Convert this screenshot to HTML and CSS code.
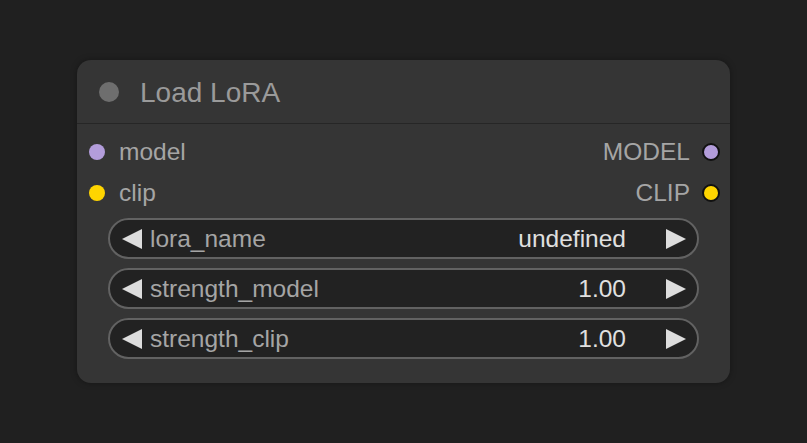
FILE: index.html
```html
<!DOCTYPE html>
<html>
<head>
<meta charset="utf-8">
<link rel="stylesheet" href="styles.css">
</head>
<body>
<div class="canvas">
  <div class="node">
    <div class="title">
      <span class="title-dot"></span>
      <span class="title-text">Load LoRA</span>
    </div>
    <div class="slots">
      <div class="slot-row">
        <div class="slot in"><span class="dot purple"></span><span>model</span></div>
        <div class="slot out"><span>MODEL</span><span class="dot purple outlined"></span></div>
      </div>
      <div class="slot-row">
        <div class="slot in"><span class="dot yellow"></span><span>clip</span></div>
        <div class="slot out"><span>CLIP</span><span class="dot yellow outlined"></span></div>
      </div>
    </div>
    <div class="widgets">
      <div class="widget">
        <span class="arrow left"></span>
        <span class="w-label">lora_name</span>
        <span class="w-value">undefined</span>
        <span class="arrow right"></span>
      </div>
      <div class="widget">
        <span class="arrow left"></span>
        <span class="w-label">strength_model</span>
        <span class="w-value">1.00</span>
        <span class="arrow right"></span>
      </div>
      <div class="widget">
        <span class="arrow left"></span>
        <span class="w-label">strength_clip</span>
        <span class="w-value">1.00</span>
        <span class="arrow right"></span>
      </div>
    </div>
  </div>
</div>
</body>
</html>
```
FILE: styles.css
```css
html, body {
  margin: 0;
  padding: 0;
  background: #202020;
  width: 807px;
  height: 443px;
  overflow: hidden;
  font-family: "Liberation Sans", Arial, sans-serif;
}
.canvas {
  padding: 60px 0 0 77px;
}
.node {
  width: 653px;
  height: 323px;
  box-sizing: border-box;
  background: #353535;
  border-radius: 14px;
  box-shadow: 0 0 6px rgba(0,0,0,0.35);
  overflow: hidden;
}
.title {
  height: 63px;
  border-bottom: 1px solid #262626;
  display: flex;
  align-items: center;
  padding-left: 22px;
  box-sizing: content-box;
}
.title-dot {
  width: 20px;
  height: 20px;
  border-radius: 50%;
  background: #6e6e6e;
  flex: none;
}
.title-text {
  margin-left: 21px;
  font-size: 28px;
  color: #9a9a9a;
  line-height: 1;
  margin-top: 2px;
}
.slots {
  padding-top: 7px;
}
.slot-row {
  height: 41px;
  display: flex;
  justify-content: space-between;
  align-items: center;
  padding: 0 10px 0 12px;
}
.slot {
  display: flex;
  align-items: center;
  font-size: 24.5px;
  color: #a5a5a5;
}
.slot.in .dot { margin-right: 14px; }
.slot.out .dot { margin-left: 12px; }
.dot {
  width: 16px;
  height: 16px;
  border-radius: 50%;
  box-sizing: border-box;
  flex: none;
}
.dot.outlined {
  width: 18px;
  height: 18px;
  border: 2px solid #111;
}
.purple { background: #b39ddb; }
.yellow { background: #ffd500; }
.widgets {
  padding: 5px 31px 0 31px;
  display: flex;
  flex-direction: column;
  gap: 9px;
}
.widget {
  height: 41px;
  box-sizing: border-box;
  border: 2px solid #626262;
  border-radius: 21px;
  background: #222222;
  display: flex;
  align-items: center;
  padding: 0 11px 0 12px;
  font-size: 24.5px;
}
.w-label {
  color: #a5a5a5;
  margin-left: 8px;
  flex: 1;
}
.w-value {
  color: #e0e0e0;
  margin-right: 40px;
}
.arrow {
  width: 0;
  height: 0;
  border-top: 10px solid transparent;
  border-bottom: 10px solid transparent;
  flex: none;
}
.arrow.left { border-right: 20px solid #dddddd; }
.arrow.right { border-left: 20px solid #dddddd; }
```
